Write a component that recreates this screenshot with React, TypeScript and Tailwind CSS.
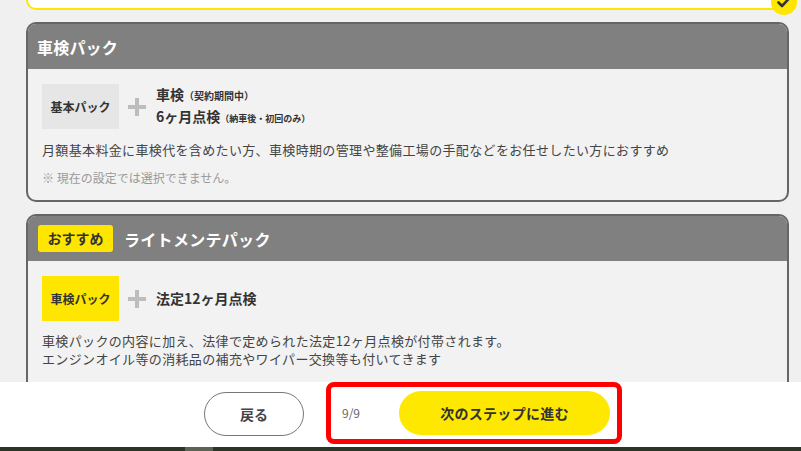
import React from "react";

const FONT = { fontFamily: '"Noto Sans CJK JP", "Noto Sans", sans-serif' };

function Plus() {
  return (
    <svg width="18" height="18" viewBox="0 0 18 18" className="shrink-0">
      <rect x="7" y="0" width="4" height="18" fill="#bdbdbd" />
      <rect x="0" y="7" width="18" height="4" fill="#bdbdbd" />
    </svg>
  );
}

function Check() {
  return (
    <div className="absolute -right-[10px] -bottom-[7px] w-[26px] h-[26px] rounded-full bg-[#ffe600] flex items-center justify-center">
      <svg width="14" height="12" viewBox="0 0 14 12">
        <path d="M1.5 6.5 L5 10 L12.5 2" fill="none" stroke="#333" strokeWidth="2.6" strokeLinecap="round" strokeLinejoin="round" />
      </svg>
    </div>
  );
}

export default function App() {
  return (
    <div className="w-[801px] h-[451px] overflow-hidden flex flex-col bg-[#f0f0f0]" style={FONT}>
      <div className="flex-1 overflow-hidden pl-[26px] pr-[12px]">
        {/* selected card (scrolled off the top) */}
        <div className="relative -mt-[40px] h-[50px] rounded-[10px] border-2 border-[#ffe600] bg-white">
          <Check />
        </div>

        {/* 車検パック */}
        <div className="mt-[12px] rounded-[10px] border-2 border-[#666] overflow-hidden bg-[#f2f2f2]">
          <div className="h-[45px] bg-[#808080] flex items-center px-[9px]">
            <span className="text-white text-[16px] font-bold tracking-[0.2px]">車検パック</span>
          </div>
          <div className="pl-[14px] pr-4 pt-[15px] pb-[13px]">
            <div className="flex items-center">
              <div className="w-[77px] h-[45px] bg-[#e6e6e6] flex items-center justify-center text-[12px] font-bold text-[#333]">
                基本パック
              </div>
              <div className="ml-[9px] mr-[10px]">
                <Plus />
              </div>
              <div className="text-[#333] font-bold leading-[21px]">
                <div className="text-[14px]">
                  車検<span className="text-[10px]">（契約期間中）</span>
                </div>
                <div className="text-[14px]">
                  6ヶ月点検<span className="text-[9px]">（納車後・初回のみ）</span>
                </div>
              </div>
            </div>
            <p className="mt-[12px] text-[13px] tracking-[0.35px] text-[#444] leading-[18px]">
              月額基本料金に車検代を含めたい方、車検時期の管理や整備工場の手配などをお任せしたい方におすすめ
            </p>
            <p className="mt-[10px] text-[12px] text-[#999] leading-[18px]">※ 現在の設定では選択できません。</p>
          </div>
        </div>

        {/* ライトメンテパック */}
        <div className="mt-[12px] rounded-[10px] border-2 border-[#666] overflow-hidden bg-[#f2f2f2]">
          <div className="h-[45px] bg-[#808080] flex items-center pl-[10px]">
            <span className="w-[75px] h-[27px] rounded-[3px] bg-[#ffe600] flex items-center justify-center text-[14px] font-bold text-[#333]">
              おすすめ
            </span>
            <span className="ml-[11px] text-white text-[16px] font-bold tracking-[0.3px]">ライトメンテパック</span>
          </div>
          <div className="pl-[14px] pr-4 pt-[15px] pb-[60px]">
            <div className="flex items-center">
              <div className="w-[77px] h-[45px] bg-[#ffe600] flex items-center justify-center text-[12px] font-bold text-[#333]">
                車検パック
              </div>
              <div className="ml-[9px] mr-[10px]">
                <Plus />
              </div>
              <div className="text-[14px] font-bold text-[#333]">法定12ヶ月点検</div>
            </div>
            <p className="mt-[11px] text-[13px] tracking-[0.35px] text-[#444] leading-[18px]">
              車検パックの内容に加え、法律で定められた法定12ヶ月点検が付帯されます。
              <br />
              エンジンオイル等の消耗品の補充やワイパー交換等も付いてきます
            </p>
          </div>
        </div>
      </div>

      {/* footer */}
      <div className="h-[65px] shrink-0 bg-white flex items-start pl-[204px]">
        <button className="mt-[10px] w-[100px] h-[44px] rounded-full border border-[#777] bg-white text-[14px] font-bold text-[#444]">
          戻る
        </button>
        <div className="ml-[22px] w-[296px] h-[62px] rounded-[8px] border-[5px] border-[#ff0000] flex items-center pl-[11px]">
          <span className="text-[12px] text-[#666]">9/9</span>
          <button className="ml-[39px] w-[211px] h-[44px] rounded-full bg-[#ffe800] text-[14px] font-bold tracking-[0.3px] text-[#333]">
            次のステップに進む
          </button>
        </div>
      </div>
      <div className="h-[4px] shrink-0 bg-[#2b3427] flex">
        <div className="ml-[185px] w-[28px] bg-[#5c6354]" />
      </div>
    </div>
  );
}
